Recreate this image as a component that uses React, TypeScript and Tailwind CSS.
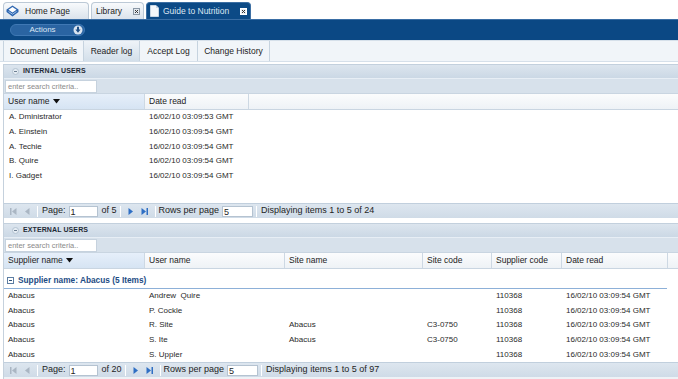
import React from "react";

const FONT = "font-['Liberation_Sans',Arial,sans-serif]";

function NavIcon({ kind, active }: { kind: "first" | "prev" | "next" | "last"; active: boolean }) {
  const c = active ? "#2f6fc4" : "#aab6c3";
  return (
    <svg width="9" height="9" viewBox="0 0 9 9">
      {kind === "first" && (
        <>
          <rect x="1" y="1" width="1.5" height="7" fill={c} />
          <path d="M7.5 1 L3 4.5 L7.5 8 Z" fill={c} />
        </>
      )}
      {kind === "prev" && <path d="M6.5 1 L2 4.5 L6.5 8 Z" fill={c} />}
      {kind === "next" && <path d="M2.5 1 L7 4.5 L2.5 8 Z" fill={c} />}
      {kind === "last" && (
        <>
          <path d="M1.5 1 L6 4.5 L1.5 8 Z" fill={c} />
          <rect x="6.5" y="1" width="1.5" height="7" fill={c} />
        </>
      )}
    </svg>
  );
}

function Sep() {
  return <div className="w-px h-[11px] bg-[#a9b9c9] border-r border-white mx-[3px]" />;
}

function Pager({ of, total }: { of: number; total: number }) {
  return (
    <div className="h-[15px] flex items-center bg-gradient-to-b from-[#dde6ef] to-[#cfdbe7] border-t border-[#c1cfdd] text-[9px] text-[#1e1e1e] pl-[2px]">
      <div className="w-[14px] flex justify-center"><NavIcon kind="first" active={false} /></div>
      <div className="w-[14px] flex justify-center"><NavIcon kind="prev" active={false} /></div>
      <Sep />
      <span className="ml-[1px]">Page:</span>
      <div className="ml-[3px] w-[29px] h-[11px] bg-white border border-[#b5c3d1] text-[9px] leading-[10px] pl-[1px]">1</div>
      <span className="ml-[4px]">of {of}</span>
      <Sep />
      <div className="w-[14px] flex justify-center"><NavIcon kind="next" active /></div>
      <div className="w-[14px] flex justify-center"><NavIcon kind="last" active /></div>
      <Sep />
      <span>Rows per page</span>
      <div className="ml-[3px] w-[31px] h-[11px] bg-white border border-[#b5c3d1] text-[9px] leading-[10px] pl-[1px]">5</div>
      <Sep />
      <span className="ml-[1px]">Displaying items 1 to 5 of {total}</span>
    </div>
  );
}

function SectionHeader({ title }: { title: string }) {
  return (
    <>
      <div className="h-[14px] flex items-center bg-gradient-to-b from-[#dce5ee] to-[#cbd8e5] border-t border-[#c3d0dd] pl-[8px]">
        <svg width="7" height="7" viewBox="0 0 7 7" className="mr-[4px]">
          <rect x="0.5" y="0.5" width="6" height="6" rx="3" fill="#e6edf4" stroke="#b3c2d1" />
          <rect x="2" y="3" width="3" height="1" fill="#6d7f92" />
        </svg>
        <span className="text-[7px] font-bold text-[#1f2a36] tracking-[0.1px]">{title}</span>
      </div>
      <div className="h-[15px] flex items-center bg-[#d7e1eb] border-t border-[#e7eef5]">
        <div className="ml-[1px] w-[92px] h-[13px] bg-white border border-[#c6d2de] text-[7.5px] text-[#8a8a8a] leading-[12px] pl-[2px]">
          enter search criteria..
        </div>
      </div>
    </>
  );
}

function SortArrow() {
  return (
    <svg width="7" height="5" viewBox="0 0 7 5" className="ml-[3px]">
      <path d="M0 0 L7 0 L3.5 4.5 Z" fill="#111" />
    </svg>
  );
}

function HeaderCell({ w, label, sorted, grow }: { w?: number; label: string; sorted?: boolean; grow?: boolean }) {
  return (
    <div
      className={`h-full flex items-center pl-[4px] border-r border-[#cdd8e3] ${sorted ? "bg-gradient-to-b from-[#e6effa] to-[#d6e4f3]" : ""} ${grow ? "flex-1" : ""}`}
      style={w ? { width: w } : undefined}
    >
      <span>{label}</span>
      {sorted && <SortArrow />}
    </div>
  );
}

const internalRows = [
  ["A. Dministrator", "16/02/10 03:09:53 GMT"],
  ["A. Einstein", "16/02/10 03:09:54 GMT"],
  ["A. Techie", "16/02/10 03:09:54 GMT"],
  ["B. Quire", "16/02/10 03:09:54 GMT"],
  ["I. Gadget", "16/02/10 03:09:54 GMT"],
];

const externalRows = [
  ["Abacus", "Andrew  Quire", "", "", "110368", "16/02/10 03:09:54 GMT"],
  ["Abacus", "P. Cockle", "", "", "110368", "16/02/10 03:09:54 GMT"],
  ["Abacus", "R. Site", "Abacus", "C3-0750", "110368", "16/02/10 03:09:54 GMT"],
  ["Abacus", "S. Ite", "Abacus", "C3-0750", "110368", "16/02/10 03:09:54 GMT"],
  ["Abacus", "S. Uppler", "", "", "110368", "16/02/10 03:09:54 GMT"],
];

const extWidths = [140, 140, 138, 69, 70, 106];

function CloseBox({ dark }: { dark?: boolean }) {
  return (
    <svg width="7" height="7" viewBox="0 0 7 7">
      <rect x="0.5" y="0.5" width="6" height="6" fill={dark ? "#e9eef4" : "#e4e9ef"} stroke={dark ? "#ffffff" : "#8a97a5"} />
      <path d="M2 2 L5 5 M5 2 L2 5" stroke="#333" strokeWidth="1" />
    </svg>
  );
}

export default function App() {
  return (
    <div className={`w-[678px] h-[379px] overflow-hidden bg-white ${FONT} text-[#222]`}>
      {/* Top tabs */}
      <div className="h-[19px] flex items-end pl-[3px] gap-[2px]">
        <div className="w-[86px] h-[17px] rounded-t-[4px] border border-b-0 border-[#bcc9d6] bg-gradient-to-b from-[#f8fafc] to-[#dbe3ec] flex items-center pl-[2px]">
          <svg width="13" height="12" viewBox="0 0 13 12">
            <path d="M6.5 0.5 L12.5 4.5 L12.5 7 L6.5 11.5 L0.5 7 L0.5 4.5 Z" fill="#2e66b0" />
            <path d="M6.5 2 L10.5 4.8 L6.5 7.5 L2.5 4.8 Z" fill="#ffffff" />
            <path d="M2.5 6.5 L6.5 9.2 L10.5 6.5" stroke="#9ec0e6" fill="none" />
          </svg>
          <span className="ml-[6px] text-[8.5px] text-[#1c1c1c]">Home Page</span>
        </div>
        <div className="w-[53px] h-[17px] rounded-t-[4px] border border-b-0 border-[#bcc9d6] bg-gradient-to-b from-[#f8fafc] to-[#dbe3ec] flex items-center pl-[4px] pr-[3px] justify-between">
          <span className="text-[8.5px] text-[#1c1c1c]">Library</span>
          <CloseBox />
        </div>
        <div className="w-[105px] h-[17px] rounded-t-[4px] bg-[#0c4a86] border border-b-0 border-[#3d6fa3] flex items-center pl-[3px] pr-[3px]">
          <svg width="9" height="12" viewBox="0 0 9 12">
            <path d="M0.5 0.5 L6 0.5 L8.5 3 L8.5 11.5 L0.5 11.5 Z" fill="#f4f7fb" stroke="#c9d6e4" />
            <path d="M6 0.5 L6 3 L8.5 3" fill="#c9d6e4" />
          </svg>
          <span className="ml-[4px] text-[8.5px] text-[#dde7f2]">Guide to Nutrition</span>
          <div className="flex-1" />
          <CloseBox dark />
        </div>
      </div>

      {/* Blue action bar */}
      <div className="h-[21px] bg-[#0b4884] border-t border-[#3a6ea5] flex items-center pl-[10px]">
        <div className="w-[75px] h-[12px] rounded-full bg-[#2a64a2] border border-[#3f78b4] flex items-center relative">
          <span className="flex-1 text-center text-[8px] text-[#dbe7f4] pr-[10px]">Actions</span>
          <svg width="10" height="10" viewBox="0 0 10 10" className="absolute right-[1px] top-[0px]">
            <circle cx="5" cy="5" r="4.5" fill="#d9e4f0" />
            <path d="M4 1.8 L6 1.8 L6 4.6 L7.6 4.6 L5 7.8 L2.4 4.6 L4 4.6 Z" fill="#1f4f86" />
          </svg>
        </div>
      </div>

      {/* Sub tabs */}
      <div className="h-[22px] bg-[#f1f5f9] border-t border-[#d6e0ea] border-b border-[#c8d5e2] flex pl-[3px]">
        <div className="h-full w-[81px] border-l border-r border-[#c6d3df] flex items-center justify-center text-[8.5px]">Document Details</div>
        <div className="h-full w-[56px] border-r border-[#c6d3df] bg-gradient-to-b from-[#eef3f8] to-[#d3dfea] flex items-center justify-center text-[8.5px]">Reader log</div>
        <div className="h-full w-[58px] border-r border-[#c6d3df] flex items-center justify-center text-[8.5px]">Accept Log</div>
        <div className="h-full w-[72px] border-r border-[#c6d3df] flex items-center justify-center text-[8.5px]">Change History</div>
      </div>

      <div className="h-[2px]" />

      {/* Content with left frame */}
      <div className="ml-[3px] border-l border-[#c5d1dd] flex flex-col">
        {/* Internal users */}
        <SectionHeader title="INTERNAL USERS" />
        <div className="h-[17px] flex text-[8.5px] bg-gradient-to-b from-[#fbfcfd] to-[#eef2f6] border-t border-[#c9d5e1] border-b border-[#c5d3e0]">
          <HeaderCell w={141} label="User name" sorted />
          <HeaderCell w={104} label="Date read" />
          <div className="flex-1" />
        </div>
        <div className="h-[93px] bg-white">
          {internalRows.map((r, i) => (
            <div key={i} className="h-[14.7px] flex items-center text-[8px] text-[#2a2a2a]">
              <div className="w-[145px] pl-[5px]">{r[0]}</div>
              <div className="pl-[0px]">{r[1]}</div>
            </div>
          ))}
        </div>
        <Pager of={5} total={24} />
        <div className="h-[5px] bg-white" />

        {/* External users */}
        <SectionHeader title="EXTERNAL USERS" />
        <div className="h-[17px] flex text-[8.5px] bg-gradient-to-b from-[#fbfcfd] to-[#eef2f6] border-t border-[#c9d5e1] border-b border-[#c5d3e0]">
          <HeaderCell w={141} label="Supplier name" sorted />
          <HeaderCell w={140} label="User name" />
          <HeaderCell w={138} label="Site name" />
          <HeaderCell w={69} label="Site code" />
          <HeaderCell w={70} label="Supplier code" />
          <HeaderCell w={106} label="Date read" />
          <div className="flex-1" />
        </div>
        <div className="h-[20px] flex items-end bg-white">
          <div className="w-[663px] h-[17px] border-b border-[#8db0d8] flex items-center pl-[3px]">
            <svg width="7" height="7" viewBox="0 0 7 7" className="mr-[4px]">
              <rect x="0.5" y="0.5" width="6" height="6" fill="#ffffff" stroke="#5d7ea3" />
              <rect x="2" y="3" width="3" height="1" fill="#2d4f78" />
            </svg>
            <span className="text-[8.3px] font-bold text-[#1d4c84]">Supplier name: Abacus (5 Items)</span>
          </div>
        </div>
        <div className="h-[73px] bg-white">
          {externalRows.map((r, i) => (
            <div key={i} className="h-[14.6px] flex items-center text-[8px] text-[#2a2a2a]">
              {r.map((c, j) => (
                <div key={j} className="pl-[4px] whitespace-pre" style={{ width: j === 0 ? 141 : extWidths[j] }}>
                  {c}
                </div>
              ))}
            </div>
          ))}
        </div>
        <Pager of={20} total={97} />
        <div className="h-[3px] bg-[#eef2f6]" />
      </div>
    </div>
  );
}
